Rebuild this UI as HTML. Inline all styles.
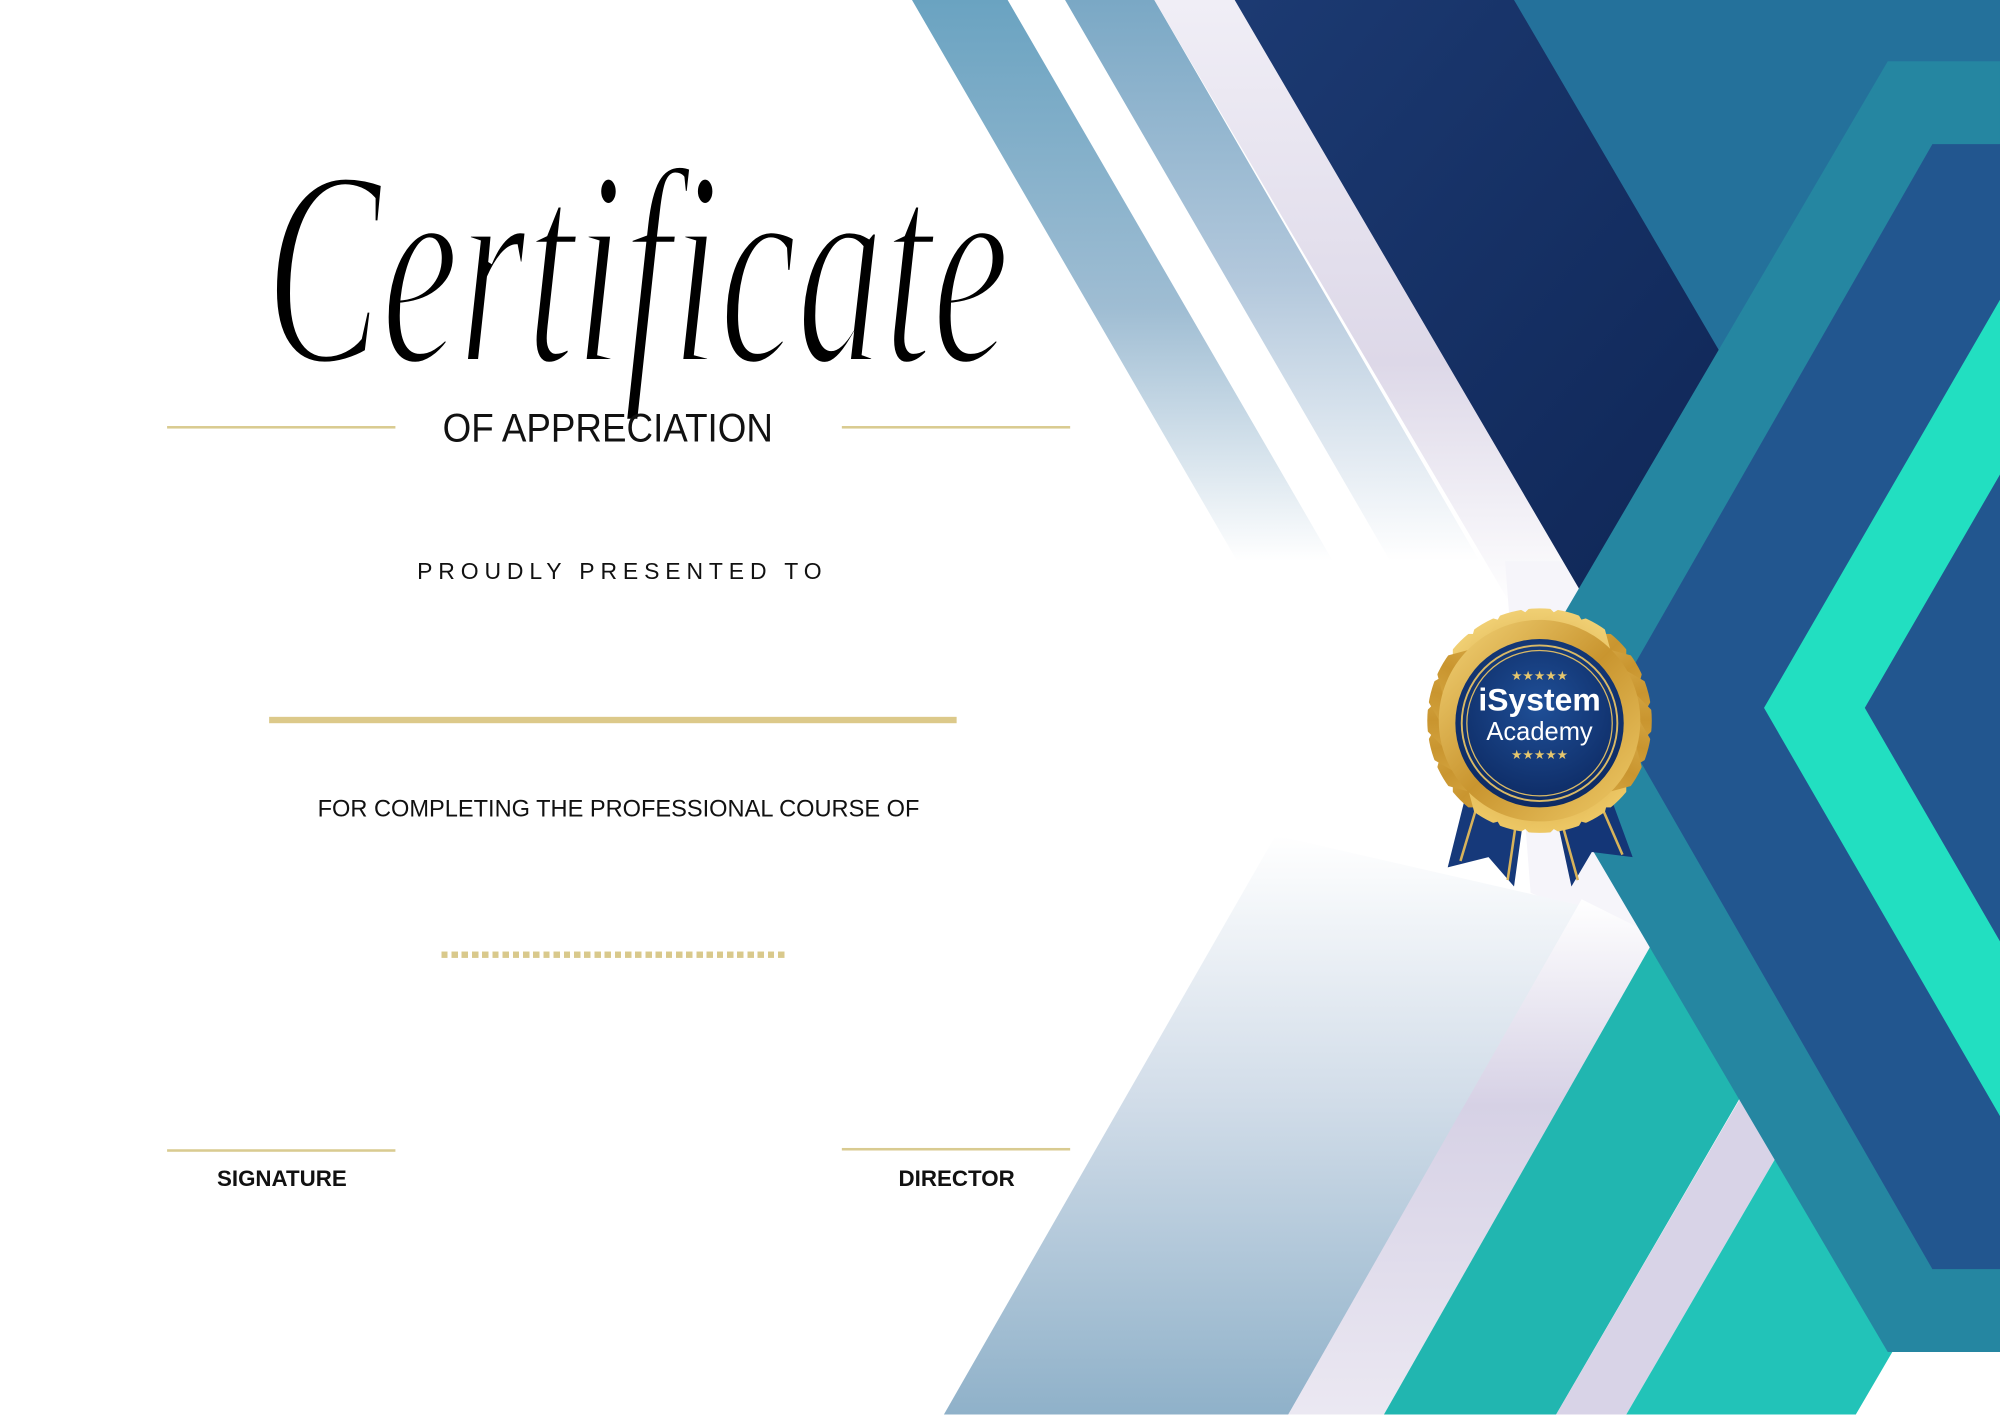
<!DOCTYPE html>
<html><head><meta charset="utf-8"><style>
html,body{margin:0;padding:0;width:2000px;height:1414px;overflow:hidden;background:#fff}
#c{position:absolute;left:0;top:0;width:1568px;height:1109px;transform:scale(1.27551);transform-origin:0 0;font-family:"Liberation Sans",sans-serif}
svg{position:absolute;left:0;top:0}
.t{position:absolute;white-space:nowrap;color:#111}
.ln{position:absolute;background:#d9cb91}
</style></head><body><div id="c">
<svg width="1568" height="1109" viewBox="0 0 1568 1109">
<defs>
<linearGradient id="u1" x1="0" y1="0" x2="0" y2="1"><stop offset="0" stop-color="#6aa3c1"/><stop offset=".55" stop-color="#9fbdd3"/><stop offset="1" stop-color="#fff"/></linearGradient>
<linearGradient id="u2" x1="0" y1="0" x2="0" y2="1"><stop offset="0" stop-color="#7aa8c5"/><stop offset=".5" stop-color="#b3c8dc"/><stop offset="1" stop-color="#fff"/></linearGradient>
<linearGradient id="u3" x1="0" y1="0" x2="0" y2="1"><stop offset="0" stop-color="#f0eef6"/><stop offset=".6" stop-color="#ddd8e8"/><stop offset="1" stop-color="#fff"/></linearGradient>
<linearGradient id="l1" x1="0" y1="1" x2="0" y2="0"><stop offset="0" stop-color="#8fb1c9"/><stop offset=".55" stop-color="#d2dde9"/><stop offset="1" stop-color="#fff"/></linearGradient>
<linearGradient id="l2" x1="0" y1="1" x2="0" y2="0"><stop offset="0" stop-color="#ebe8f2"/><stop offset=".6" stop-color="#d6d1e5"/><stop offset="1" stop-color="#fff"/></linearGradient>
<linearGradient id="nv" x1="0" y1="0" x2="1" y2="1"><stop offset="0" stop-color="#1c3a72"/><stop offset="1" stop-color="#0f2656"/></linearGradient>
<radialGradient id="sn" cx=".5" cy=".4" r=".6"><stop offset="0" stop-color="#1f4f97"/><stop offset="1" stop-color="#0d2a63"/></radialGradient>
<linearGradient id="gd" x1="0" y1="0" x2="1" y2="1"><stop offset="0" stop-color="#f4d57a"/><stop offset=".5" stop-color="#c9952f"/><stop offset="1" stop-color="#f0cc6a"/></linearGradient>
<clipPath id="cp"><circle cx="1207" cy="565" r="88"/></clipPath>
</defs>
<polygon points="715,0 790,0 1045,440 970,440" fill="url(#u1)"/>
<polygon points="835,0 905,0 1160,440 1090,440" fill="url(#u2)"/>
<polygon points="905,0 975,0 1250,475 1185,475" fill="url(#u3)"/>
<polygon points="1180,440 1260,440 1300,740 1200,700" fill="#f6f5fa"/>
<polygon points="740,1109 1010,1109 1240,710 1000,655" fill="url(#l1)"/>
<polygon points="1010,1109 1085,1109 1300,735 1240,705" fill="url(#l2)"/>
<polygon points="1085,1109 1220,1109 1440,730 1295,740" fill="#21b6b0"/>
<polygon points="1220,1109 1275,1109 1420,860 1365,860" fill="#d8d3e7"/>
<polygon points="1275,1109 1455,1109 1600,860 1420,860" fill="#22c3b8"/>
<polygon points="1150,0 1568,0 1568,500 1300,500" fill="#24719b"/>
<polygon points="968,0 1187,0 1352,282 1240,465" fill="url(#nv)"/>
<polygon points="1480,48 1568,48 1568,1060 1480,1060 1183,555" fill="#2586a1"/>
<polygon points="1515,113 1568,113 1568,995 1515,995 1262,555" fill="#22568f"/>
<polygon points="1383,555 1568,235 1568,372 1462,555 1568,738 1568,875" fill="#22dfc1"/>
<polygon points="1455,1109 1568,1109 1568,1060 1484,1060" fill="#fff"/>
<g>
<polygon points="1152,612 1196,630 1187,695 1167,672 1135,680" fill="#16397a"/>
<polygon points="1218,630 1258,612 1280,672 1248,668 1232,695" fill="#143677"/>
<line x1="1160" y1="625" x2="1145" y2="675" stroke="#d8b35a" stroke-width="2"/>
<line x1="1190" y1="635" x2="1182" y2="690" stroke="#d8b35a" stroke-width="2"/>
<line x1="1222" y1="636" x2="1237" y2="690" stroke="#d8b35a" stroke-width="2"/>
<line x1="1252" y1="624" x2="1272" y2="670" stroke="#d8b35a" stroke-width="2"/>
<g clip-path="url(#cp)" fill="url(#gd)">
<rect x="1139" y="497" width="136" height="136" transform="rotate(0 1207 565)"/>
<rect x="1139" y="497" width="136" height="136" transform="rotate(15 1207 565)"/>
<rect x="1139" y="497" width="136" height="136" transform="rotate(30 1207 565)"/>
<rect x="1139" y="497" width="136" height="136" transform="rotate(45 1207 565)"/>
<rect x="1139" y="497" width="136" height="136" transform="rotate(60 1207 565)"/>
<rect x="1139" y="497" width="136" height="136" transform="rotate(75 1207 565)"/>
</g>
<circle cx="1207" cy="565" r="79" fill="url(#gd)"/>
<circle cx="1207" cy="567" r="66" fill="url(#sn)"/>
<circle cx="1207" cy="567" r="61" fill="none" stroke="#d9b966" stroke-width="1.5"/>
<circle cx="1207" cy="567" r="57" fill="none" stroke="#d9b966" stroke-width="1"/>
<text x="1207" y="533" text-anchor="middle" font-size="10" fill="#e6c76e" font-family="DejaVu Sans">★★★★★</text>
<text x="1207" y="557" text-anchor="middle" font-size="25" font-weight="bold" fill="#fff" font-family="Liberation Sans">iSystem</text>
<text x="1207" y="580" text-anchor="middle" font-size="20" fill="#fff" font-family="Liberation Sans">Academy</text>
<text x="1207" y="595" text-anchor="middle" font-size="10" fill="#e6c76e" font-family="DejaVu Sans">★★★★★</text>
</g>
</svg>
<div class="t" style="left:208px;top:80px;font-family:'Liberation Serif',serif;font-style:italic;font-size:220px;line-height:260px;transform:scaleX(0.62);transform-origin:0 0;color:#000;-webkit-text-stroke:5px #fff">Certificate</div>
<div class="ln" style="left:131px;top:334px;width:179px;height:1.5px"></div>
<div class="ln" style="left:660px;top:334px;width:179px;height:1.5px"></div>
<div class="t" style="left:347px;top:318px;font-size:31px;line-height:36px;transform:scaleX(0.93);transform-origin:0 0">OF APPRECIATION</div>
<div class="t" style="left:327px;top:437px;width:320px;text-align:center;font-size:18px;letter-spacing:4.6px;line-height:22px">PROUDLY PRESENTED TO</div>
<div class="ln" style="left:211px;top:562px;width:539px;height:5px;background:#dcc98a"></div>
<div class="t" style="left:249px;top:623px;font-size:18.5px;line-height:22px">FOR COMPLETING THE PROFESSIONAL COURSE OF</div>
<div style="position:absolute;left:346px;top:746px;width:270px;height:5px;background:repeating-linear-gradient(90deg,#d9c98c 0 5px,transparent 5px 8px)"></div>
<div class="ln" style="left:131px;top:901px;width:179px;height:1.5px"></div>
<div class="ln" style="left:660px;top:900px;width:179px;height:1.5px"></div>
<div class="t" style="left:131px;top:913px;width:180px;text-align:center;font-size:17.5px;font-weight:bold;line-height:22px">SIGNATURE</div>
<div class="t" style="left:660px;top:913px;width:180px;text-align:center;font-size:17.5px;font-weight:bold;line-height:22px">DIRECTOR</div>
</div></body></html>
